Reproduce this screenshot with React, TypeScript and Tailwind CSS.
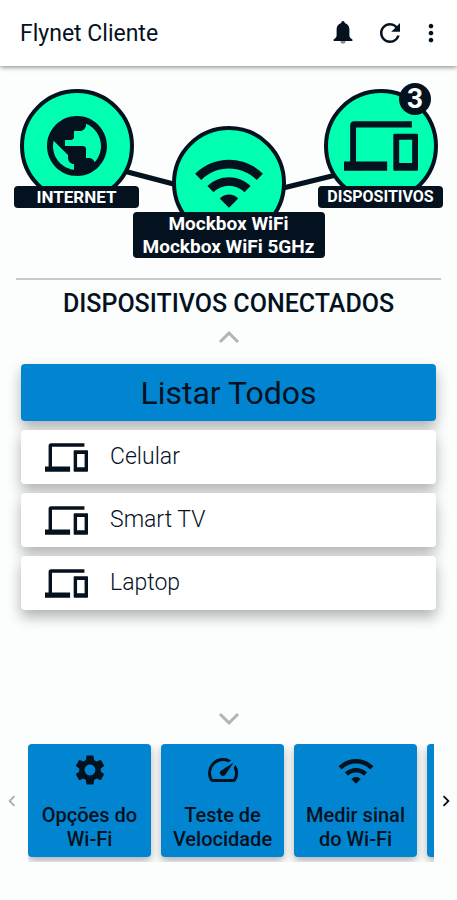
import React from "react";
import { MdChevronLeft, MdChevronRight, MdMoreVert, MdPublic, MdRefresh, MdSettings, MdSpeed, MdWifi } from "react-icons/md";

const devices = ["Celular", "Smart TV", "Laptop"];

const actions = [
  { label: "Opções do Wi-Fi", icon: <MdSettings size={36} /> },
  { label: "Teste de Velocidade", icon: <MdSpeed size={36} /> },
  { label: "Medir sinal do Wi-Fi", icon: <MdWifi size={38} /> },
];

const Bell = () => (
  <svg width="20" height="24" viewBox="0 0 20 24">
    <path d="M7.500 20h5a2.500 2.700 0 0 1-5 0z" fill="#8a8a8a" />
    <path
      d="M10 0c1 0 1.800.8 1.800 1.900 3 .9 4.600 3.300 4.600 6.600v6c0 1.600.8 2.700 3 4V20H.6v-1.500c2.200-1.300 3-2.400 3-4v-6c0-3.300 1.600-5.700 4.600-6.600C8.200.8 9 0 10 0z"
      fill="#04121f"
    />
  </svg>
);

const Devices = ({ size }: { size: number }) => (
  <svg width={size} height={size} viewBox="0 0 24 24" fill="currentColor">
    <path d="M3.900 6H22V4H3.400C2.500 4 2 4.500 2 5.400V17H0v3h14v-3H3.900z" />
    <path fillRule="evenodd" d="M16.400 8h7.200q.4 0 .4.400v11.200q0 .4-.4.400h-7.200q-.4 0-.4-.4V8.400q0-.4.4-.4zM17.900 10v7.500h4.200V10z" />
  </svg>
);

const Chevron = ({ down = false }: { down?: boolean }) => (
  <svg width="22" height="14" viewBox="0 0 22 14" fill="none" stroke="#b0b4b4" strokeWidth="3">
    <path d={down ? "M2 2l9 9 9-9" : "M2 12l9-9 9 9"} />
  </svg>
);

const circle = "flex size-[114px] items-center justify-center rounded-full border-4 border-[#04121f] bg-[#00ffb0]";
const tag = "relative rounded bg-[#04121f] text-center font-bold text-white";

const App: React.FC = () => {
  return (
    <div className="flex min-h-screen flex-col overflow-x-hidden bg-[#fcfdfd] font-[Roboto,sans-serif] text-[#04121f]">
      <header className="flex h-[66px] items-center bg-white pr-3 pl-5 shadow-[0_1px_5px_rgba(0,0,0,0.5)]">
        <h1 className="flex-1 pt-0.5 text-[23px]">Flynet Cliente</h1>
        <div className="flex items-center gap-3">
          <button aria-label="Notificações" className="px-2.5"><Bell /></button>
          <button aria-label="Atualizar"><MdRefresh size={30} /></button>
          <button aria-label="Mais opções"><MdMoreVert size={28} /></button>
        </div>
      </header>

      {/* network map */}
      <section className="relative flex justify-between px-3.5 pt-[23px]">
        <svg className="absolute inset-0 size-full" viewBox="0 0 457 192" preserveAspectRatio="none" stroke="#04121f" strokeWidth="5">
          <path d="M120 104L185 121M275 124L340 108" />
        </svg>
        <div className="relative flex w-[125px] flex-col items-center">
          <div className={circle}><MdPublic size={72} /></div>
          <div className={`${tag} -mt-[17px] w-full text-[17px] leading-[22px]`}>INTERNET</div>
        </div>
        <div className="relative flex min-w-0 flex-1 flex-col items-center pt-[37px]">
          <div className={circle}><MdWifi size={74} /></div>
          <div className={`${tag} -mt-7 w-48 shrink-0 text-[19px] leading-[23px]`}>
            Mockbox WiFi
            <br />
            Mockbox WiFi 5GHz
          </div>
        </div>
        <div className="relative flex w-[125px] flex-col items-center">
          <div className={circle}><Devices size={74} /></div>
          <span className="absolute -top-1.5 right-3 flex size-8 items-center justify-center rounded-full bg-[#04121f] text-[28px] font-bold text-white">3</span>
          <div className={`${tag} -mt-[17px] w-full text-base leading-[22px]`}>DISPOSITIVOS</div>
        </div>
      </section>

      <main className="flex flex-1 flex-col pt-5">
        <hr className="mx-4 border-t-2 border-[#c9c9c9]" />
        <h2 className="pt-2 text-center text-[25px] leading-8 font-medium">DISPOSITIVOS CONECTADOS</h2>
        <button aria-label="Rolar para cima" className="mt-2.5 self-center"><Chevron /></button>

        <div className="mt-5 flex flex-1 flex-col gap-[9px] px-[21px]">
          <button className="h-[57px] rounded bg-[#0285d0] text-[32px] shadow-[0_7px_14px_rgba(0,0,0,0.3)]">Listar Todos</button>
          {devices.map((name) => (
            <button key={name} className="flex h-[54px] items-center gap-[22px] rounded bg-white px-6 text-[23px] shadow-[0_7px_14px_rgba(0,0,0,0.3)]">
              <Devices size={43} />
              <span className="font-light">{name}</span>
            </button>
          ))}
        </div>

        <button aria-label="Rolar para baixo" className="self-center"><Chevron down /></button>
      </main>

      <nav className="mt-[18px] mb-[38px] flex items-center">
        <button aria-label="Anterior" className="flex w-7 pb-1 pl-px text-[#a9adad]"><MdChevronLeft size={22} /></button>
        <div className="flex flex-1 gap-2.5 overflow-hidden pb-[5px]">
          {actions.map((a) => (
            <button
              key={a.label}
              className="flex h-[113px] w-[123px] shrink-0 flex-col items-center justify-between rounded bg-[#0285d0] px-2 pt-2 pb-1.5 text-xl leading-6 font-medium shadow-[0_4px_8px_rgba(0,0,0,0.3)]"
            >
              {a.icon}
              {a.label}
            </button>
          ))}
          <button
            aria-label="Reiniciar roteador"
            className="flex h-[113px] w-[123px] shrink-0 justify-center rounded bg-[#0285d0] pt-2 shadow-[0_4px_8px_rgba(0,0,0,0.3)]"
          >
            <MdRefresh size={36} />
          </button>
        </div>
        <button aria-label="Próximo" className="flex w-[23px] justify-center pb-1"><MdChevronRight size={22} /></button>
      </nav>
    </div>
  );
};

export default App;
